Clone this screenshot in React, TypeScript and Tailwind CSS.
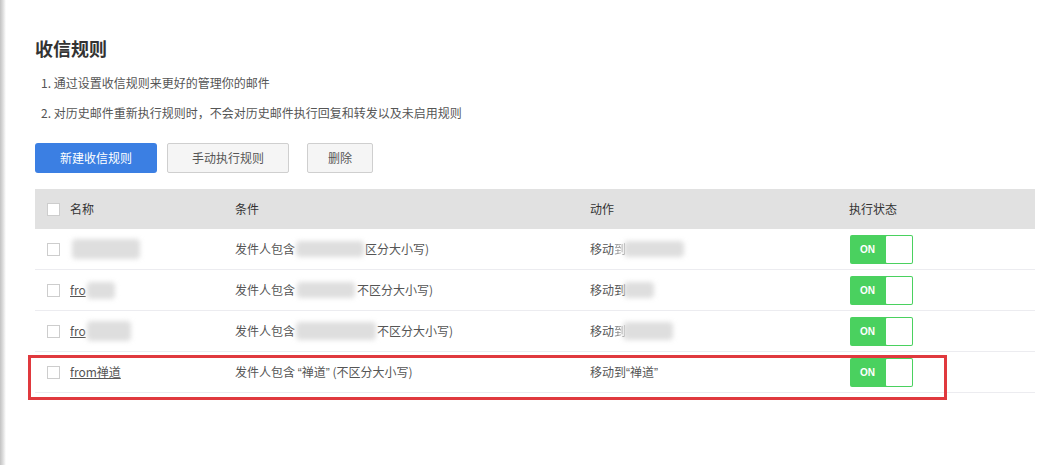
import React from "react";

const font = { fontFamily: '"Microsoft YaHei", "Noto Sans CJK SC", "Noto Sans", sans-serif' };
const latin = { fontFamily: '"Liberation Sans", Arial, sans-serif' };

function Blob({ w, h = 16, className = "" }: { w: number; h?: number; className?: string }) {
  return (
    <span
      className={"inline-block align-middle rounded-[4px] bg-[#dedede] blur-[2.5px] " + className}
      style={{ width: w, height: h }}
    />
  );
}

function CheckBox() {
  return <span className="inline-block w-[13px] h-[13px] border border-[#cdcdcd] bg-white shrink-0" />;
}

function Toggle() {
  return (
    <div className="relative w-[63px] h-[29px] bg-[#4ad15f] rounded-[2px] flex items-center">
      <span className="pl-[10px] text-[10px] font-bold text-white" style={latin}>
        ON
      </span>
      <span className="absolute right-[1px] top-[1px] bottom-[1px] w-[26px] bg-white rounded-[1px]" />
    </div>
  );
}

type Row = {
  name: React.ReactNode;
  cond: React.ReactNode;
  act: React.ReactNode;
};

const Q = ({ c }: { c: string }) => <span style={latin}>{c}</span>;

const rows: Row[] = [
  {
    name: (
      <span className="flex items-center">
        <Blob w={68} h={20} className="ml-[2px]" />
      </span>
    ),
    cond: (
      <span className="flex items-center">
        发件人包含<Blob w={68} className="mx-[1px]" />区分大小写)
      </span>
    ),
    act: (
      <span className="flex items-center">
        移动<span className="opacity-60">到</span>
        <Blob w={60} className="-ml-[2px]" />
      </span>
    ),
  },
  {
    name: (
      <span className="flex items-center">
        <span className="underline">fro</span>
        <Blob w={28} h={17} className="ml-[1px]" />
      </span>
    ),
    cond: (
      <span className="flex items-center">
        发件人包含<Blob w={58} className="mx-[2px]" />不区分大小写)
      </span>
    ),
    act: (
      <span className="flex items-center">
        移动到<Blob w={30} className="-ml-[2px]" />
      </span>
    ),
  },
  {
    name: (
      <span className="flex items-center">
        <span className="underline">fro</span>
        <Blob w={44} h={20} className="ml-[1px]" />
      </span>
    ),
    cond: (
      <span className="flex items-center">
        发件人包含<Blob w={80} h={18} className="mx-[1px]" />不区分大小写)
      </span>
    ),
    act: (
      <span className="flex items-center">
        移动<span className="opacity-70">到</span>
        <Blob w={50} h={18} className="-ml-[3px]" />
      </span>
    ),
  },
  {
    name: <span className="underline">from禅道</span>,
    cond: (
      <span>
        发件人包含 <Q c={"\u201C"} />禅道<Q c={"\u201D"} /> (不区分大小写)
      </span>
    ),
    act: (
      <span>
        移动到<Q c={"\u201C"} />禅道<Q c={"\u201D"} />
      </span>
    ),
  },
];

export default function App() {
  return (
    <div className="flex w-[1062px] h-[465px] bg-white overflow-hidden text-[#555]" style={font}>
      <div className="w-[6px] h-full bg-linear-to-r from-[#c2c2c2] via-[#dedede] to-white shrink-0" />
      <div className="flex-1 pl-[29px] pt-[36px]">
        <h1 className="text-[18px] leading-[24px] font-bold text-[#333]">收信规则</h1>
        <div className="mt-[8px] pl-[6px] text-[12px] leading-[30px]">
          <p>1. 通过设置收信规则来更好的管理你的邮件</p>
          <p>2. 对历史邮件重新执行规则时，不会对历史邮件执行回复和转发以及未启用规则</p>
        </div>
        <div className="mt-[15px] flex items-center text-[12px]">
          <button className="w-[122px] h-[30px] rounded-[3px] bg-[#3b7fe3] text-white">新建收信规则</button>
          <button className="ml-[10px] w-[122px] h-[30px] rounded-[2px] border border-[#cfcfcf] bg-[#f5f5f5] text-[#555]">
            手动执行规则
          </button>
          <button className="ml-[18px] w-[66px] h-[30px] rounded-[2px] border border-[#cfcfcf] bg-[#f5f5f5] text-[#555]">
            删除
          </button>
        </div>
        <div className="relative mt-[16px] w-[1000px] text-[12px]">
          <div className="grid grid-cols-[200px_355px_259px_1fr] h-[40px] items-center bg-[#e1e1e1] text-[#333]">
            <div className="flex items-center pl-[12px] gap-[10px]">
              <CheckBox />
              <span>名称</span>
            </div>
            <div>条件</div>
            <div>动作</div>
            <div>执行状态</div>
          </div>
          {rows.map((r, i) => (
            <div
              key={i}
              className="grid grid-cols-[200px_355px_259px_1fr] h-[41px] items-center border-b border-[#ececf0]"
            >
              <div className="flex items-center pl-[12px] gap-[10px]">
                <CheckBox />
                {r.name}
              </div>
              <div>{r.cond}</div>
              <div>{r.act}</div>
              <div className="pl-[1px]">
                <Toggle />
              </div>
            </div>
          ))}
          <div className="absolute left-[-7px] top-[166px] w-[919px] h-[45px] border-[3px] border-[#e0393e] pointer-events-none" />
        </div>
      </div>
    </div>
  );
}
